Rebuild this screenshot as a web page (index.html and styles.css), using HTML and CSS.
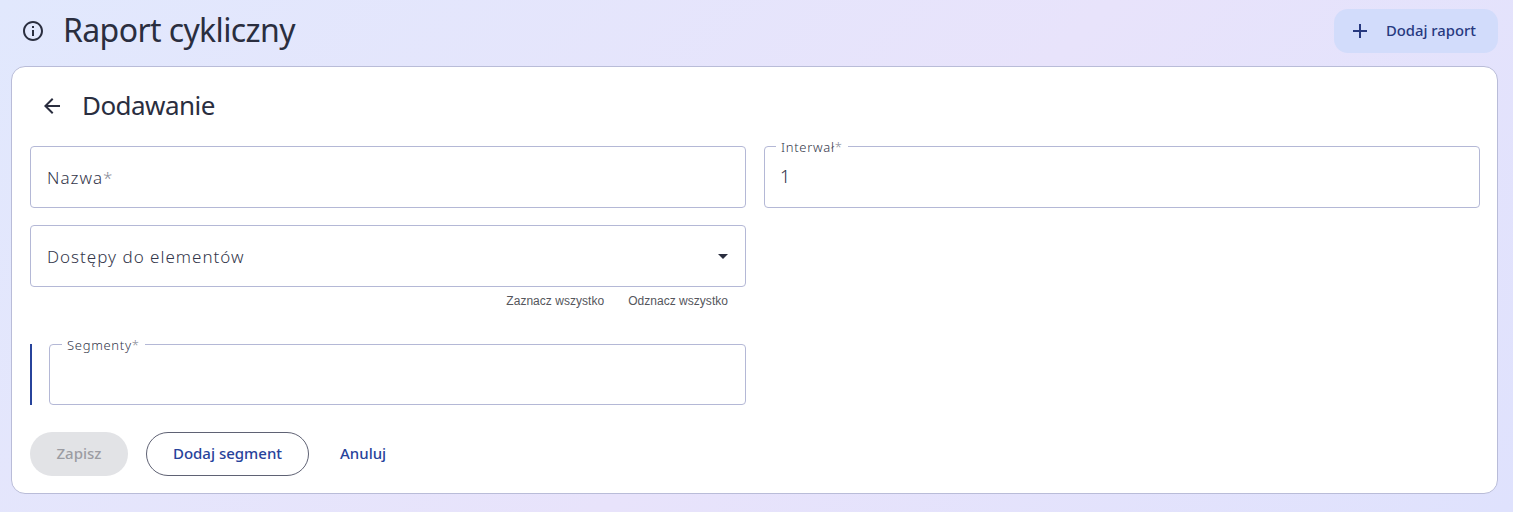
FILE: index.html
```html
<!DOCTYPE html>
<html lang="pl">
<head>
<meta charset="utf-8">
<title>Raport cykliczny</title>
<link rel="stylesheet" href="styles.css">
</head>
<body>
<div class="page">
  <header class="topbar">
    <div class="topbar-title">
      <svg class="info-icon" viewBox="0 0 24 24" width="24" height="24" aria-hidden="true"><path d="M11 7h2v2h-2zm0 4h2v6h-2zm1-9C6.48 2 2 6.48 2 12s4.48 10 10 10 10-4.48 10-10S17.52 2 12 2zm0 18c-4.41 0-8-3.59-8-8s3.59-8 8-8 8 3.59 8 8-3.59 8-8 8z"/></svg>
      <h1>Raport cykliczny</h1>
    </div>
    <button class="add-btn" type="button">
      <svg viewBox="0 0 24 24" width="24" height="24" aria-hidden="true"><path d="M19 13h-6v6h-2v-6H5v-2h6V5h2v6h6v2z"/></svg>
      <span>Dodaj raport</span>
    </button>
  </header>
  <main class="card">
    <div class="card-head">
      <svg class="back-icon" viewBox="0 0 24 24" width="24" height="24" aria-hidden="true"><path d="M20 11H7.83l5.59-5.59L12 4l-8 8 8 8 1.41-1.41L7.83 13H20v-2z"/></svg>
      <h2>Dodawanie</h2>
    </div>
    <div class="form-grid">
      <div class="field"><span class="placeholder">Nazwa<i>*</i></span></div>
      <div class="field">
        <span class="float-label">Interwał<i>*</i></span>
        <span class="value">1</span>
      </div>
      <div class="select-col">
        <div class="field field-select">
          <span class="placeholder">Dostępy do elementów</span>
          <span class="caret"></span>
        </div>
        <div class="select-links"><span>Zaznacz wszystko</span><span>Odznacz wszystko</span></div>
      </div>
    </div>
    <div class="segment-row">
      <div class="segment-col">
        <div class="field field-segment"><span class="float-label">Segmenty<i>*</i></span></div>
      </div>
    </div>
    <div class="actions">
      <button class="btn btn-disabled" type="button">Zapisz</button>
      <button class="btn btn-outline" type="button">Dodaj segment</button>
      <button class="btn btn-text" type="button">Anuluj</button>
    </div>
  </main>
</div>
</body>
</html>
```

FILE: styles.css
```css
* { box-sizing: border-box; }
html, body { margin: 0; height: 100%; }
body {
  font-family: "Noto Sans", "Open Sans", sans-serif;
  color: #2a2e3f;
  background: linear-gradient(135deg, #e1e8fd 0%, #e8e3fb 55%, #dfe2fd 100%);
  overflow: hidden;
}
.page { padding: 9px 15px 18px 11px; }
.topbar {
  display: flex;
  justify-content: space-between;
  align-items: center;
  height: 44px;
  margin-bottom: 13px;
}
.topbar-title { display: flex; align-items: center; gap: 18px; padding-left: 10px; }
.info-icon { fill: #2a2e3f; flex: none; }
h1 { margin: 0 0 2px; font-size: 32px; font-weight: 400; line-height: 42px; letter-spacing: -0.62px; }
.add-btn {
  display: flex;
  align-items: center;
  gap: 14px;
  width: 164px;
  height: 44px;
  padding: 0 0 2px 14px;
  border: 0;
  border-radius: 14px;
  background: #d2dcfb;
  color: #27397f;
  font: 500 14.8px "Noto Sans", sans-serif;
}
.add-btn svg { fill: #27397f; flex: none; margin-top: 2px; }
.card {
  height: 428px;
  padding: 18px;
  background: #fff;
  border: 1px solid #b9bcd8;
  border-radius: 14px;
}
.card-head { display: flex; align-items: center; gap: 18px; height: 42px; padding-left: 10px; margin-bottom: 19px; }
.back-icon { fill: #2a2e3f; flex: none; }
h2 { margin: 0 0 2px; font-size: 26px; font-weight: 400; line-height: 40px; letter-spacing: -0.55px; }
.form-grid { display: grid; grid-template-columns: 716px 716px; column-gap: 18px; row-gap: 17px; }
.field {
  position: relative;
  display: flex;
  align-items: center;
  height: 62px;
  padding: 0 16px;
  border: 1px solid #b4b8d6;
  border-radius: 4px;
  background: #fff;
}
.placeholder, .value { font-size: 17px; letter-spacing: 1px; font-weight: 300; color: #33364a; }
.value { font-size: 18px; color: #2a2e3f; margin: 0 0 2px -1px; }
.placeholder i, .float-label i { font-style: normal; color: #8a8c98; }
.float-label {
  position: absolute;
  top: -7px;
  left: 11px;
  padding: 0 5px;
  background: #fff;
  font-size: 13px;
  line-height: 15px;
  letter-spacing: 0.7px;
  font-weight: 300;
  color: #33364a;
}
.field-segment .float-label { left: 12px; }
.field-select { justify-content: space-between; padding-right: 17px; }
.caret { width: 0; height: 0; border-left: 5px solid transparent; border-right: 5px solid transparent; border-top: 5px solid #2a2e3f; }
.select-links {
  display: flex;
  justify-content: flex-end;
  gap: 24px;
  padding: 7px 18px 0 0;
  font: 12px/14px "Liberation Sans", sans-serif;
  letter-spacing: 0.03px;
  color: #55565c;
}
.segment-row { width: 716px; margin-top: 36px; border-left: 2px solid #27439b; padding-left: 17px; }
.field-segment { height: 61px; }
.actions { display: flex; align-items: center; margin-top: 27px; }
.btn {
  height: 44px;
  border-radius: 22px;
  font: 500 15px "Noto Sans", sans-serif;
  border: 0;
  background: none;
  padding: 0 0 2px;
}
.btn-disabled { width: 98px; background: #e2e3e6; color: #9b9ca2; margin-right: 18px; }
.btn-outline { width: 163px; border: 1px solid #5f6274; color: #27439b; background: #fff; margin-right: 31px; }
.btn-text { color: #27439b; }
```
